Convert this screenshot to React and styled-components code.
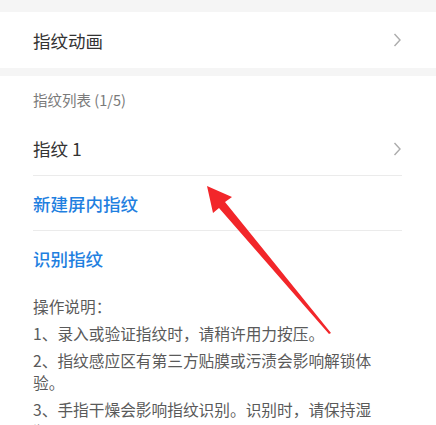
import React from 'react'
import styled, { createGlobalStyle } from 'styled-components'

const GlobalStyle = createGlobalStyle`
  html, body {
    margin: 0;
    padding: 0;
    background: #f5f5f5;
    font-family: "Noto Sans CJK SC", "Noto Sans", sans-serif;
  }
`

const Root = styled.div`
  position: relative;
  width: 436px;
  height: 425px;
  overflow: hidden;
  background: #f5f5f5;
`

const Gap = styled.div`
  height: ${p => p.h}px;
`

const Card = styled.div`
  background: #fff;
`

const Row = styled.div`
  display: flex;
  align-items: center;
  justify-content: space-between;
  height: ${p => p.h}px;
  margin: 0 34px 0 33px;
  border-bottom: ${p => (p.divider ? '1px solid #ebebeb' : 'none')};
  font-size: 17.5px;
  color: ${p => (p.blue ? '#1f80e0' : '#333')};
  font-weight: ${p => (p.blue ? 500 : 400)};
`

const ListHeader = styled.div`
  display: flex;
  align-items: center;
  height: 46px;
  padding-left: 33px;
  font-size: 14.5px;
  color: #7a7a7a;
`

const Notes = styled.div`
  padding: 10px 0 0 33px;
  width: 346px;
  font-size: 15.7px;
  line-height: 22px;
  color: #5a5a5a;
`

const Para = styled.p`
  margin: 0 0 5px;
`

const Arrow = styled.svg`
  position: absolute;
  left: 0;
  top: 0;
  pointer-events: none;
`

const Chevron = () => (
  <svg width="10" height="16" viewBox="0 0 10 16">
    <path d="M2.5 2 L8 8 L2.5 14" fill="none" stroke="#acacac" strokeWidth="1.4" />
  </svg>
)

export default function App() {
  return (
    <Root>
      <GlobalStyle />
      <Gap h={12} />
      <Card>
        <Row h={56}>
          指纹动画
          <Chevron />
        </Row>
      </Card>
      <Gap h={8} />
      <Card>
        <ListHeader>指纹列表 (1/5)</ListHeader>
        <Row h={53} divider>
          指纹 1
          <Chevron />
        </Row>
        <Row h={54} divider blue>新建屏内指纹</Row>
        <Row h={55} blue>识别指纹</Row>
        <Notes>
          <Para>操作说明：</Para>
          <Para>1、录入或验证指纹时，请稍许用力按压。</Para>
          <Para>2、指纹感应区有第三方贴膜或污渍会影响解锁体验。</Para>
          <Para>3、手指干燥会影响指纹识别。识别时，请保持湿润。</Para>
        </Notes>
      </Card>
      <Arrow width="436" height="425" viewBox="0 0 436 425">
        <polygon
          points="207,186 232,197 225,202 331,333 329,334 219,208 213,213"
          fill="#f2262a"
        />
      </Arrow>
    </Root>
  )
}
